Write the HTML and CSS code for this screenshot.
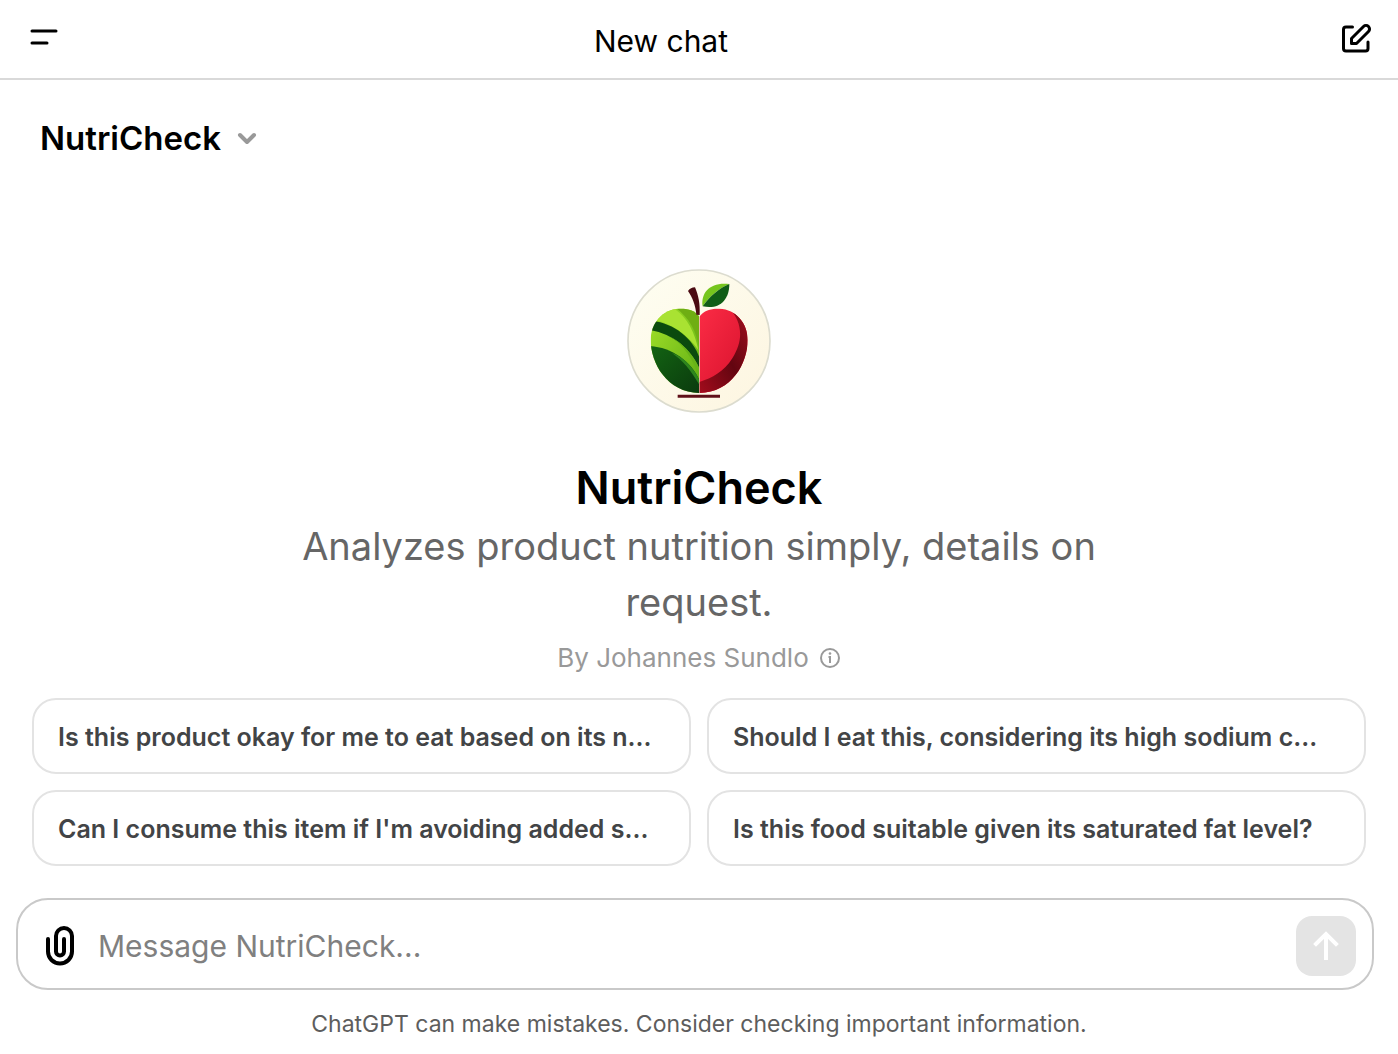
FILE: index.html
```html
<!DOCTYPE html>
<html lang="en">
<head>
<meta charset="utf-8">
<meta name="viewport" content="width=device-width, initial-scale=1">
<title>NutriCheck</title>
<link rel="stylesheet" href="styles.css">
</head>
<body>
<div class="app">
  <header class="topbar">
    <button class="icon-button" type="button" aria-label="Open sidebar">
      <svg width="28" height="28" viewBox="0 0 28 28" fill="none" stroke="currentColor" stroke-width="3" stroke-linecap="round"><path d="M2 8H26M2 20H17"/></svg>
    </button>
    <h1 class="topbar-title">New chat</h1>
    <button class="icon-button" type="button" aria-label="New chat">
      <svg width="32" height="32" viewBox="0 0 32 32" fill="none" stroke="currentColor" stroke-width="3" stroke-linecap="round" stroke-linejoin="round"><path d="M12.500 6H6Q3.500 6 3.500 8.500V27.500Q3.500 30 6 30H25.500Q28 30 28 27.500V21"/><path d="M11.500 22.500V17.500L23.500 5.500A3.400 3.400 0 0 1 28.500 10.500L16.500 22.500Z"/></svg>
    </button>
  </header>

  <main class="chat">
    <button class="model" type="button">
      <span>NutriCheck</span>
      <svg width="20" height="16" viewBox="0 0 20 16" fill="none" stroke="#999" stroke-width="4" stroke-linecap="round" stroke-linejoin="round"><path d="M3 5L10 12L17 5"/></svg>
    </button>

    <section class="intro">
      <svg class="avatar" width="144" height="144" viewBox="24 27 432 432" role="img" aria-label="NutriCheck logo">
        <defs>
          <linearGradient id="cream" x1="0" y1="0" x2="1" y2="1"><stop offset="0" stop-color="#fefef2"/><stop offset="1" stop-color="#fdf5e0"/></linearGradient>
          <linearGradient id="red" x1="0" y1="0" x2="1" y2="1"><stop offset="0" stop-color="#fb2c45"/><stop offset="1" stop-color="#d50f2b"/></linearGradient>
          <linearGradient id="shade" x1="1" y1="0" x2="0" y2="1"><stop offset="0" stop-color="#a5101f"/><stop offset=".5" stop-color="#630510"/><stop offset="1" stop-color="#a40c1d"/></linearGradient>
          <linearGradient id="lime" x1="0" y1="0" x2="1" y2="1"><stop offset="0" stop-color="#a6e32a"/><stop offset="1" stop-color="#5fae14"/></linearGradient>
          <linearGradient id="forest" x1="0" y1="0" x2="1" y2="1"><stop offset="0" stop-color="#136413"/><stop offset="1" stop-color="#0a3a0d"/></linearGradient>
          <clipPath id="left"><path d="M241 170C228 150 205 145 180 146C130 148 95 190 95 240C95 310 145 398 241 399Z"/></clipPath>
          <clipPath id="right"><path d="M241 170C255 150 278 145 301 146C352 148 386 190 386 240C386 310 338 398 241 399Z"/></clipPath>
        </defs>
        <circle cx="240" cy="243" r="213" fill="url(#cream)" stroke="#dcdccf" stroke-width="5"/>
        <g clip-path="url(#left)">
          <path fill="url(#lime)" d="M90 130H242V400H90Z"/>
          <path fill="#6fae13" d="M165 140C208 170 232 208 241 268V140Z"/>
          <path fill="#a9e232" d="M110 172C130 135 160 140 168 148C205 174 228 218 238 270C200 218 155 190 108 180Z"/>
          <path fill="#0b4a0e" d="M100 182C165 190 222 234 242 294V326C216 268 164 222 92 210Z"/>
          <path fill="#68b318" d="M150 228C195 254 224 298 241 358V326C222 282 190 248 150 228Z"/>
          <path fill="url(#forest)" d="M90 258C158 262 215 302 242 362V402H90Z"/>
          <path fill="#2e861d" d="M158 278C196 292 225 324 242 362V376C216 330 190 300 158 278Z"/>
        </g>
        <g clip-path="url(#right)">
          <path fill="url(#red)" d="M241 140H390V402H241Z"/>
          <path fill="url(#shade)" d="M330 145C370 185 375 240 340 295C315 335 280 354 241 366V402H390V145Z"/>
        </g>
        <path fill="#4b0b12" d="M207 93Q215 82 228 82C238 105 244 132 242 165L232 164C230 136 220 112 207 93Z"/>
        <path fill="#76c51d" d="M251 139C245 96 275 65 331 72C300 85 273 108 251 139Z"/>
        <path fill="#105d16" d="M251 139C273 108 300 85 331 72C331 120 301 150 251 139Z"/>
        <path fill="#601018" d="M176 404H303V413H176Z"/>
      </svg>
      <h2 class="name">NutriCheck</h2>
      <p class="description">Analyzes product nutrition simply, details on request.</p>
      <p class="author">
        <span>By Johannes Sundlo</span>
        <svg width="22" height="22" viewBox="0 0 22 22" fill="none" stroke="currentColor" stroke-width="2"><circle cx="11" cy="11" r="9"/><path d="M9.500 10H11V16"/><circle cx="11" cy="6.500" r="1.300" fill="currentColor" stroke="none"/></svg>
      </p>
    </section>

    <div class="suggestions">
      <button class="suggestion" type="button">Is this product okay for me to eat based on its n...</button>
      <button class="suggestion" type="button">Should I eat this, considering its high sodium c...</button>
      <button class="suggestion" type="button">Can I consume this item if I'm avoiding added s...</button>
      <button class="suggestion" type="button">Is this food suitable given its saturated fat level?</button>
    </div>
  </main>

  <footer class="bottom">
    <form class="composer">
      <button class="icon-button" type="button" aria-label="Attach file">
        <svg width="32" height="44" viewBox="0 0 32 44" fill="none" stroke="currentColor" stroke-width="4" stroke-linecap="round"><path d="M4 15V27.500A12 12 0 0 0 28 27.500V12A8 8 0 0 0 12 12V27.500A4 4 0 0 0 20 27.500V15"/></svg>
      </button>
      <input class="message" type="text" placeholder="Message NutriCheck..." aria-label="Message NutriCheck">
      <button class="send" type="submit" aria-label="Send message">
        <svg width="32" height="32" viewBox="0 0 32 32" fill="none" stroke="#fff" stroke-width="4" stroke-linecap="square"><path d="M16 28V5M6 14L16 4L26 14"/></svg>
      </button>
    </form>
    <p class="notice">ChatGPT can make mistakes. Consider checking important information.</p>
  </footer>
</div>
</body>
</html>
```
FILE: styles.css
```css
* { box-sizing: border-box; }

body {
  margin: 0;
  background: #fff;
  color: #000;
  font-family: Inter, "Liberation Sans", sans-serif;
}

h1, h2, p { margin: 0; }

button {
  border: 0;
  padding: 0;
  background: none;
  color: inherit;
  font: inherit;
}

svg { display: block; flex: none; }

.app {
  display: flex;
  flex-direction: column;
  min-height: 100vh;
}

.topbar {
  display: flex;
  align-items: center;
  justify-content: space-between;
  height: 80px;
  padding: 0 26px 4px 30px;
  border-bottom: 2px solid #d9d9d9;
}

.topbar-title {
  padding: 8px 76px 0 0;
  font-size: 30px;
  line-height: 40px;
  font-weight: 400;
}

.chat {
  display: flex;
  flex: 1;
  flex-direction: column;
}

.model {
  display: flex;
  align-items: center;
  align-self: flex-start;
  gap: 16px;
  margin: 36px 0 0 40px;
  font-size: 33px;
  line-height: 44px;
  font-weight: 600;
}

.intro {
  display: flex;
  flex: 1;
  flex-direction: column;
  align-items: center;
  justify-content: flex-end;
  padding: 0 32px 22px;
  text-align: center;
}

.avatar { margin-bottom: 45px; }

.name {
  font-size: 45px;
  line-height: 60px;
  font-weight: 600;
}

.description {
  max-width: 832px;
  color: #666;
  font-size: 38px;
  line-height: 56px;
}

.author {
  display: flex;
  align-items: center;
  gap: 10px;
  margin-top: 10px;
  color: #999;
  font-size: 26px;
  line-height: 36px;
}

.suggestions {
  display: grid;
  grid-template-columns: 1fr 1fr;
  gap: 16px;
  padding: 0 32px;
}

.suggestion {
  height: 76px;
  padding: 2px 24px 0;
  overflow: hidden;
  border: 2px solid #e3e3e3;
  border-radius: 24px;
  color: #424446;
  font-size: 25px;
  font-weight: 600;
  text-align: left;
  white-space: nowrap;
}

.bottom { padding: 32px 24px 12px 16px; }

.composer {
  display: flex;
  align-items: center;
  gap: 22px;
  height: 92px;
  padding: 4px 16px 0 26px;
  border: 2px solid #c9c9c9;
  border-radius: 32px;
}

.message {
  flex: 1;
  min-width: 0;
  padding: 0;
  border: 0;
  outline: 0;
  background: none;
  font: inherit;
  font-size: 30px;
  line-height: 40px;
}

.message::placeholder { color: #808080; opacity: 1; }

.send {
  display: grid;
  place-items: center;
  width: 60px;
  height: 60px;
  border-radius: 16px;
  background: #e4e4e4;
}

.notice {
  padding: 16px 0 0 8px;
  color: #5d5d5d;
  font-size: 23px;
  line-height: 36px;
  text-align: center;
}
```
